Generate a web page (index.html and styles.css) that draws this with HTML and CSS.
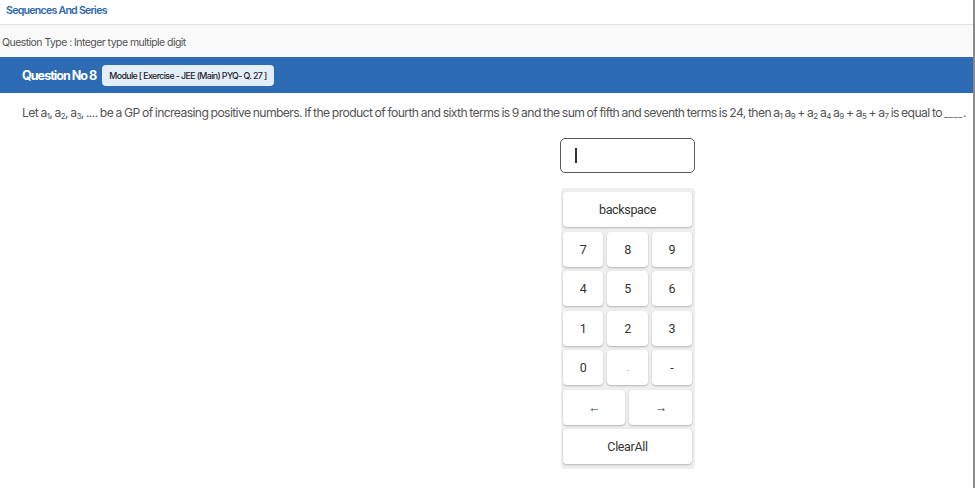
FILE: index.html
```html
<!DOCTYPE html>
<html>
<head>
<meta charset="utf-8">
<link rel="stylesheet" href="styles.css">
</head>
<body>
<div class="page">
  <div class="tabs"><span class="tab">Sequences And Series</span></div>
  <div class="qtype">Question Type : Integer type multiple digit</div>
  <div class="qbar">
    <span class="qno">Question No 8</span>
    <span class="badge">Module [ Exercise - JEE (Main) PYQ- Q. 27 ]</span>
  </div>
  <p class="question">Let a<sub>1</sub>, a<sub>2</sub>, a<sub>3</sub>, .... be a GP of increasing positive numbers. If the product of fourth and sixth terms is 9 and the sum of fifth and seventh terms is 24, then a<sub>1</sub> a<sub>9</sub> + a<sub>2</sub> a<sub>4</sub> a<sub>9</sub> + a<sub>5</sub> + a<sub>7</sub> is equal to <span class="blank">____</span>.</p>
  <div class="answer">
    <div class="input"><span class="caret"></span></div>
    <div class="keypad">
      <button class="key wide">backspace</button>
      <button class="key">7</button><button class="key">8</button><button class="key">9</button>
      <button class="key">4</button><button class="key">5</button><button class="key">6</button>
      <button class="key">1</button><button class="key">2</button><button class="key">3</button>
      <button class="key">0</button><button class="key small">.</button><button class="key">-</button>
      <div class="arrows"><button class="key">&larr;</button><button class="key">&rarr;</button></div>
      <button class="key wide">ClearAll</button>
    </div>
  </div>
</div>
</body>
</html>
```

FILE: styles.css
```css
* { box-sizing: border-box; }
html, body { margin: 0; padding: 0; background: #fff; }
body { font-family: "Inter", "Liberation Sans", Arial, sans-serif; }
.page {
  width: 975px;
  height: 488px;
  border-right: 2px solid #8a8a8a;
  display: flex;
  flex-direction: column;
}
.tabs {
  height: 25px;
  border-bottom: 1px solid #e2e2e2;
  display: flex;
  align-items: center;
  padding-left: 6px;
}
.tab {
  font-family: "Inter", sans-serif;
  font-size: 10.6px;
  font-weight: 600;
  letter-spacing: -0.75px;
  color: #2c66ad;
  padding-bottom: 3px;
}
.qtype {
  height: 32px;
  background: #f9f9f9;
  display: flex;
  align-items: center;
  padding-left: 2px;
  padding-top: 2px;
  font-family: "Inter", sans-serif;
  font-size: 10.5px;
  letter-spacing: -0.55px;
  color: #555;
}
.qbar {
  height: 36px;
  background: #2d6cb4;
  display: flex;
  align-items: center;
  padding-left: 22px;
  gap: 6px;
}
.qno {
  font-family: "Inter", sans-serif;
  font-size: 12.6px;
  font-weight: 700;
  letter-spacing: -1px;
  color: #fff;
}
.badge {
  background: #e4eefb;
  border-radius: 4px;
  padding: 0 7px;
  height: 21px;
  display: flex;
  align-items: center;
  font-family: "Inter", sans-serif;
  font-size: 8.8px;
  font-weight: 500;
  letter-spacing: -0.6px;
  color: #222;
}
.question {
  margin: 12px 0 0 22px;
  font-family: "Inter", sans-serif;
  font-size: 12.2px;
  letter-spacing: -0.62px;
  word-spacing: -0.5px;
  color: #555;
  white-space: nowrap;
  line-height: 16px;
}
.question sub { font-size: 8px; vertical-align: -2px; line-height: 0; }
.blank { font-size: 9px; letter-spacing: 0.6px; }
.answer {
  margin-top: 16px;
  margin-left: 560px;
  width: 135px;
  display: flex;
  flex-direction: column;
  gap: 15px;
}
.input {
  height: 35px;
  border: 1px solid #5a5a5a;
  border-radius: 5px;
  display: flex;
  align-items: center;
  padding-left: 14px;
}
.caret {
  width: 2px;
  height: 15px;
  background: #333;
}
.keypad {
  margin-left: 1px;
  width: 134px;
  height: 281px;
  background: #efefef;
  border-radius: 4px;
  padding: 4px 3px 4px 2px;
  display: grid;
  grid-template-columns: repeat(3, 1fr);
  grid-auto-rows: 35px;
  gap: 4.5px 4px;
}
.key {
  border: none;
  background: #fff;
  border-radius: 4px;
  box-shadow: 0 1px 2px rgba(0,0,0,0.25);
  font-family: "Roboto", "Liberation Sans", sans-serif;
  font-size: 12.5px;
  letter-spacing: -0.35px;
  color: #333;
  padding: 0;
  cursor: pointer;
}
.key.small { font-size: 9px; color: #666; }
.wide { grid-column: 1 / -1; }
.arrows {
  grid-column: 1 / -1;
  display: grid;
  grid-template-columns: 1fr 1fr;
  gap: 4px;
}
```
